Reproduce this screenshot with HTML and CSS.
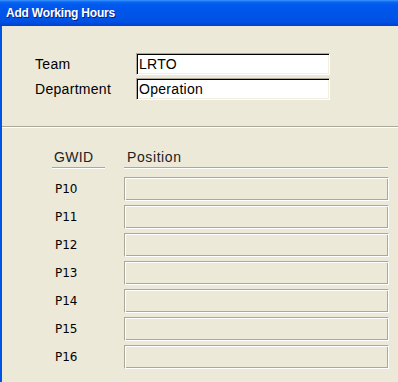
FILE: index.html
```html
<!DOCTYPE html>
<html lang="en">

<head>
  <meta charset="UTF-8">
  <meta name="viewport" content="width=device-width, initial-scale=1.0">
  <title>Add Working Hours</title>
  <link rel="stylesheet" href="styles.css">
</head>

<body>
  <div class="window">
    <div class="titlebar">Add Working Hours</div>
    <div class="window-body">
      <div class="team-form">
        <div class="form-row">
          <label for="teamInput">Team</label>
          <input type="text" id="teamInput" class="text-field" value="LRTO">
        </div>
        <div class="form-row">
          <label for="deptInput">Department</label>
          <input type="text" id="deptInput" class="text-field" value="Operation">
        </div>
      </div>
      <hr class="separator">
      <div class="positions">
        <div class="pos-header">
          <span class="col-gwid">GWID</span>
          <span class="col-position">Position</span>
        </div>
        <div class="pos-list">
          <div class="pos-row"><span class="gwid">P10</span><div class="pos-box"></div></div>
          <div class="pos-row"><span class="gwid">P11</span><div class="pos-box"></div></div>
          <div class="pos-row"><span class="gwid">P12</span><div class="pos-box"></div></div>
          <div class="pos-row"><span class="gwid">P13</span><div class="pos-box"></div></div>
          <div class="pos-row"><span class="gwid">P14</span><div class="pos-box"></div></div>
          <div class="pos-row"><span class="gwid">P15</span><div class="pos-box"></div></div>
          <div class="pos-row"><span class="gwid">P16</span><div class="pos-box"></div></div>
        </div>
      </div>
    </div>
  </div>
</body>

</html>
```

FILE: styles.css
```css
html, body {
  margin: 0;
  padding: 0;
  width: 398px;
  height: 382px;
  overflow: hidden;
  background-color: #ece9d8; /* xp dialog beige */
}

.window {
  height: 382px;
  display: flex;
  flex-direction: column;
  font-family: "Liberation Sans", Arial, sans-serif;
  color: #000;
}

.titlebar {
  height: 26px;
  line-height: 27px;
  padding-left: 6px;
  flex-shrink: 0;
  font-weight: bold;
  font-size: 12px;
  letter-spacing: -0.2px;
  color: #fff;
  text-shadow: 1px 1px 0 #0a1e8c;
  background: linear-gradient(#3d95ff 0, #0a66f2 2px, #0058ee 5px, #0054e8 60%, #0050e3 85%, #0040c8 100%);
}

.window-body {
  flex: 1;
  border-left: 2px solid #0054e3; /* blue frame */
  background-color: #ece9d8;
}

.team-form {
  padding: 27px 0 0 33px;
  display: flex;
  flex-direction: column;
  gap: 3px;
}

.form-row {
  display: flex;
  align-items: center;
  height: 22px;
}

.form-row label {
  width: 101px;
  font-size: 14px;
  letter-spacing: 0.3px;
}

.text-field {
  box-sizing: border-box;
  width: 194px;
  height: 22px;
  margin: 0;
  padding: 0 0 0 2px;
  font-family: "Liberation Sans", Arial, sans-serif;
  font-size: 14px;
  letter-spacing: 0.3px;
  color: #000;
  background: #fff;
  border: 1px solid;
  border-color: #aca899 #fff #fff #aca899;
  box-shadow: inset 1px 1px 0 #000, inset -1px -1px 0 #f1efe2;
  outline: none;
}

.separator {
  margin: 26px 0 0 0;
  height: 0;
  border: none;
  border-top: 1px solid #aca899;
  border-bottom: 1px solid #fff;
}

.positions {
  padding: 20px 0 0 50px;
}

.pos-header {
  display: flex;
  font-size: 14px;
  color: #222;
  height: 20px;
}

.col-gwid, .col-position {
  box-sizing: border-box;
  border-bottom: 1px solid #aca899;
  box-shadow: 0 1px 0 #fff;
  padding: 0 0 2px 2px;
  line-height: 18px;
}

.col-gwid {
  width: 53px;
  margin-right: 19px;
  letter-spacing: 0.3px;
}

.col-position {
  width: 264px;
  padding-left: 3px;
  letter-spacing: 0.6px;
}

.pos-list {
  padding-top: 9px;
  display: flex;
  flex-direction: column;
  gap: 4px;
}

.pos-row {
  display: flex;
  align-items: center;
  height: 24px;
}

.gwid {
  width: 72px;
  padding-left: 3px;
  box-sizing: border-box;
  font-family: "DejaVu Sans", sans-serif;
  font-size: 12px;
}

.pos-box {
  box-sizing: border-box;
  width: 265px;
  height: 24px;
  border: 1px solid;
  border-color: #aca899 #fff #fff #aca899;
  box-shadow: inset 1px 1px 0 #fff, inset -1px -1px 0 #aca899;
}
```
